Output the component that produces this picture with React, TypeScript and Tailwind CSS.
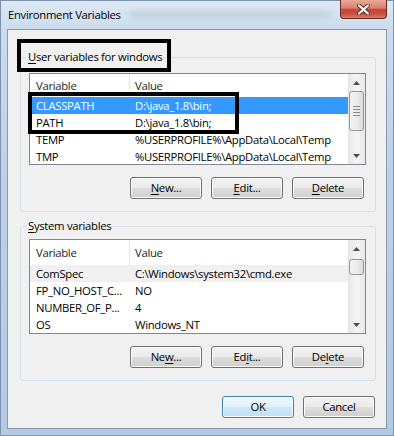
import React from "react";

const font = "font-['Open_Sans','Noto_Sans',sans-serif]";

type Row = { name: string; value: string; state?: "selected" | "inactive" };

const userRows: Row[] = [
  { name: "CLASSPATH", value: "D:\\java_1.8\\bin;", state: "selected" },
  { name: "PATH", value: "D:\\java_1.8\\bin;" },
  { name: "TEMP", value: "%USERPROFILE%\\AppData\\Local\\Temp" },
  { name: "TMP", value: "%USERPROFILE%\\AppData\\Local\\Temp" },
];

const systemRows: Row[] = [
  { name: "ComSpec", value: "C:\\Windows\\system32\\cmd.exe", state: "inactive" },
  { name: "FP_NO_HOST_C...", value: "NO" },
  { name: "NUMBER_OF_P...", value: "4" },
  { name: "OS", value: "Windows_NT" },
];

const Arrow = ({ up }: { up?: boolean }) => (
  <svg width="7" height="4" viewBox="0 0 7 4">
    <path d={up ? "M0 4 L3.5 0 L7 4 Z" : "M0 0 L3.5 4 L7 0 Z"} fill="#4d4d4d" />
  </svg>
);

const ScrollBar = ({ thumbTop, thumbHeight, grip }: { thumbTop: number; thumbHeight: number; grip?: boolean }) => (
  <div className="w-[17px] flex flex-col bg-[linear-gradient(90deg,#e4e4e4,#f3f3f3_40%,#f3f3f3_60%,#e8e8e8)]">
    <div className="h-[17px] flex items-center justify-center">
      <Arrow up />
    </div>
    <div className="flex-1 px-[1px]">
      <div
        className="rounded-[3px] border border-[#969696] bg-[linear-gradient(90deg,#f4f4f4,#ebebeb_50%,#dcdcdc)] flex flex-col items-center justify-center gap-[2px]"
        style={{ marginTop: thumbTop, height: thumbHeight }}
      >
        {grip && (
          <>
            <div className="w-[7px] h-[1px] bg-[#8a8a8a]" />
            <div className="w-[7px] h-[1px] bg-[#8a8a8a]" />
            <div className="w-[7px] h-[1px] bg-[#8a8a8a]" />
            <div className="w-[7px] h-[1px] bg-[#8a8a8a]" />
          </>
        )}
      </div>
    </div>
    <div className="h-[17px] flex items-center justify-center">
      <Arrow />
    </div>
  </div>
);

const ListView = ({
  rows,
  height,
  headerHeight,
  thumbTop,
  thumbHeight,
  grip,
}: {
  rows: Row[];
  height: number;
  headerHeight: number;
  thumbTop: number;
  thumbHeight: number;
  grip?: boolean;
}) => (
  <div className="flex border border-[#828790] bg-white overflow-hidden" style={{ height }}>
    <div className="flex-1 flex flex-col overflow-hidden">
      <div className="flex shrink-0 items-center text-[#1e1e1e]" style={{ height: headerHeight }}>
        <div className="w-[100px] h-full flex items-center pl-[6px] border-r border-[#e5e5e5]">Variable</div>
        <div className="pl-[5px]">Value</div>
      </div>
      {rows.map((r) => (
        <div
          key={r.name}
          className={
            "flex shrink-0 h-[17px] items-center whitespace-nowrap " +
            (r.state === "selected"
              ? "bg-[#3399ff] text-white"
              : r.state === "inactive"
                ? "bg-[#f0f0f0] text-black"
                : "text-black")
          }
        >
          <div className="w-[100px] pl-[6px]">{r.name}</div>
          <div className="pl-[5px]">{r.value}</div>
        </div>
      ))}
    </div>
    <ScrollBar thumbTop={thumbTop} thumbHeight={thumbHeight} grip={grip} />
  </div>
);

const Button = ({ children, primary }: { children: React.ReactNode; primary?: boolean }) => (
  <button
    className={
      "w-[72px] h-[22px] rounded-[3px] border text-[11.3px] tracking-[-0.3px] text-black flex items-center justify-center shadow-[inset_0_0_0_1px_#fcfcfc] " +
      (primary
        ? "border-[#3c7fb1] bg-[linear-gradient(#f1f8fd_0%,#e2f1fb_48%,#cde8f8_52%,#bfe1f4_100%)]"
        : "border-[#707070] bg-[linear-gradient(#f2f2f2_0%,#ebebeb_48%,#dddddd_52%,#cfcfcf_100%)]")
    }
  >
    {children}
  </button>
);

const U = ({ children }: { children: React.ReactNode }) => <span className="underline underline-offset-2">{children}</span>;

const App: React.FC = () => {
  return (
    <div
      className={`relative w-[394px] h-[436px] overflow-hidden flex flex-col px-[7px] pb-[7px] text-[11.3px] tracking-[-0.3px] leading-[16px] ${font} bg-[linear-gradient(180deg,#dfe9f5_0%,#cbdcee_7%,#bcd1e9_40%,#b3cae5_100%)] shadow-[inset_0_0_0_1px_#7d93ad]`}
    >
      {/* title bar */}
      <div className="h-[29px] flex items-start shrink-0">
        <span className="self-center pl-[1px] text-black">Environment Variables</span>
        <div className="flex-1 self-center mx-[8px] h-[5px] rounded-full bg-[#95a6bb]/40 blur-[3px]" />
        <div className="w-[47px] h-[19px] rounded-b-[4px] border border-t-0 border-[#6a2a23] bg-[linear-gradient(180deg,#e9aa98_0%,#d9826f_45%,#c8463a_52%,#c64d3f_75%,#de7c66_100%)] flex items-center justify-center">
          <svg width="13" height="11" viewBox="0 0 13 11">
            <path d="M2 1.5 L11 9.5 M11 1.5 L2 9.5" stroke="#5a2a25" strokeWidth="4" strokeLinecap="round" />
            <path d="M2 1.5 L11 9.5 M11 1.5 L2 9.5" stroke="#ffffff" strokeWidth="2.2" strokeLinecap="round" />
          </svg>
        </div>
      </div>

      {/* client area */}
      <div className="flex-1 flex flex-col bg-[#f0f0f0] border border-[#8a99ad] pl-[12px] pr-[10px] pt-[27px]">
        <div className="relative border border-[#d5dfe5] rounded-[3px] pt-[15px] pb-[12px] pl-[8px] pr-[9px]">
          <span className="absolute left-[6px] -top-[9px] px-[1px] bg-[#f0f0f0]">
            <U>U</U>ser variables for windows
          </span>
          <ListView rows={userRows} height={92} headerHeight={23} thumbTop={0} thumbHeight={40} grip />
          <div className="flex justify-end gap-[9px] pr-[2px] mt-[12px]">
            <Button>
              <U>N</U>ew...
            </Button>
            <Button>
              <U>E</U>dit...
            </Button>
            <Button>
              <U>D</U>elete
            </Button>
          </div>
        </div>

        <div className="relative mt-[14px] border border-[#d5dfe5] rounded-[3px] pt-[12px] pb-[12px] pl-[8px] pr-[9px]">
          <span className="absolute left-[6px] -top-[9px] px-[1px] bg-[#f0f0f0]">
            <U>S</U>ystem variables
          </span>
          <ListView rows={systemRows} height={95} headerHeight={25} thumbTop={2} thumbHeight={16} />
          <div className="flex justify-end gap-[9px] pr-[2px] mt-[12px]">
            <Button>
              Ne<U>w</U>...
            </Button>
            <Button>
              Ed<U>i</U>t...
            </Button>
            <Button>
              De<U>l</U>ete
            </Button>
          </div>
        </div>

        <div className="flex justify-end gap-[9px] pr-[1px] mt-[15px]">
          <Button primary>OK</Button>
          <Button>Cancel</Button>
        </div>
      </div>

      {/* annotation boxes */}
      <div className="absolute left-[17px] top-[39px] w-[154px] h-[33px] border-[4px] border-black" />
      <div className="absolute left-[28px] top-[92px] w-[211px] h-[42px] border-[4px] border-black" />
    </div>
  );
};

export default App;
